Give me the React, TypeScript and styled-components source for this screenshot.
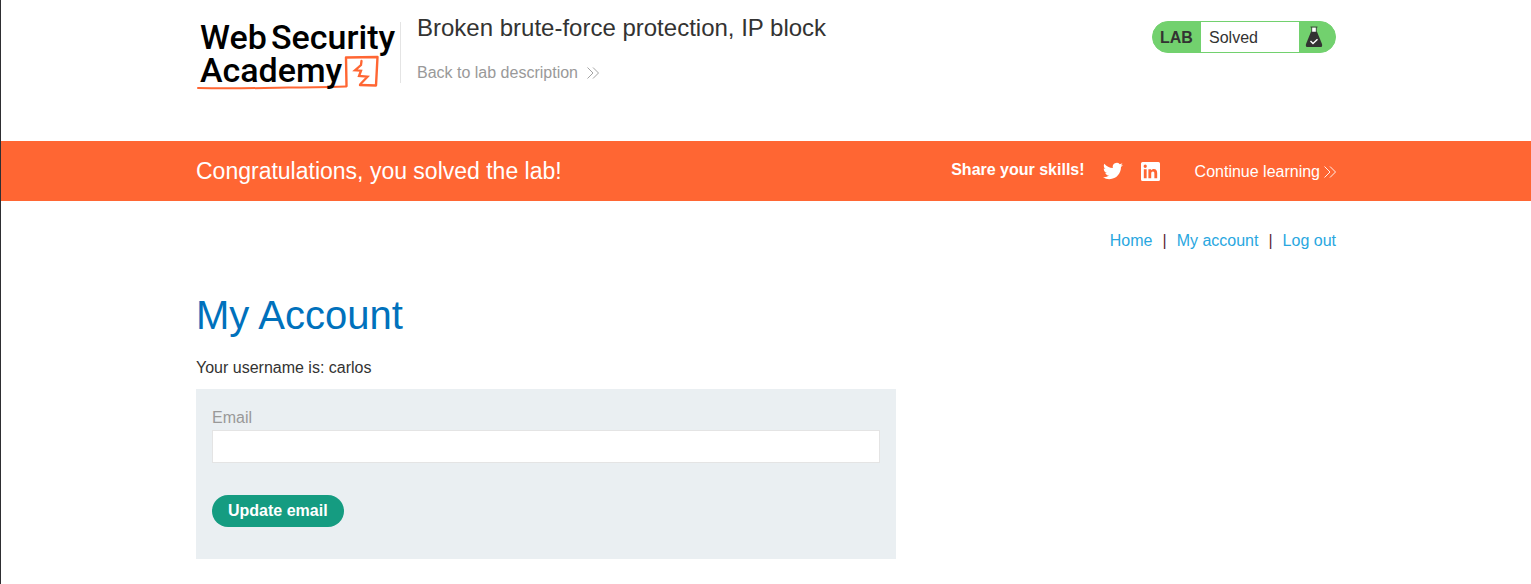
import React from "react";
import styled, { createGlobalStyle } from "styled-components";

const GlobalStyle = createGlobalStyle`
  *, *::before, *::after { box-sizing: border-box; }
  body {
    margin: 0;
    background: #fff;
    color: #333332;
    font-family: "Liberation Sans", Arial, sans-serif;
    font-size: 16px;
    line-height: 24px;
  }
`;

const Page = styled.div`
  min-height: 100vh;
  border-left: 1px solid #2e2e32;
`;

const Container = styled.div`
  width: 100%;
  max-width: 1140px;
  margin: 0 auto;
`;

const Header = styled(Container).attrs({ as: "header" })`
  display: flex;
  align-items: flex-start;
  padding: 16px 0 45px;
`;

const LogoLink = styled.a`
  flex: none;
  display: block;
  height: 80px;
`;

const LogoDrawing = styled.svg`
  display: block;
  overflow: visible;
`;

const LogoWord = styled.text`
  font-family: Roboto, "Liberation Sans", sans-serif;
  font-size: 34px;
  font-weight: 500;
  fill: #000;
`;

const TitleBlock = styled.div`
  flex: 1;
  margin-top: 6px;
  padding-left: 16px;
  height: 61px;
  border-left: 1px solid #e4e4e4;
`;

const LabTitle = styled.h2`
  margin: -8px 0 0;
  font-size: 24px;
  line-height: 28px;
  font-weight: 400;
`;

const BackLink = styled.a`
  display: inline-flex;
  align-items: center;
  gap: 9px;
  margin-top: 18px;
  line-height: 26px;
  color: #999;
  text-decoration: none;
`;

const LabStatus = styled.div`
  display: flex;
  align-items: center;
  width: 184px;
  height: 32px;
  margin-top: 5px;
  border: 1px solid #72d16e;
  border-radius: 16px;
  background: #72d16e;
  line-height: 32px;
  overflow: hidden;
`;

const LabTag = styled.span`
  width: 48px;
  height: 30px;
  padding-left: 7px;
  font-weight: 700;
`;

const LabState = styled.span`
  flex: 1;
  height: 30px;
  padding-left: 8px;
  background: #fff;
`;

const FlaskSlot = styled.span`
  display: flex;
  width: 36px;
  padding-left: 6px;
`;

const Banner = styled.section`
  background: #ff6633;
  color: #fff;
`;

const BannerRow = styled(Container)`
  display: flex;
  align-items: center;
  justify-content: space-between;
  min-height: 60px;
`;

const BannerTitle = styled.h4`
  margin: 0;
  font-size: 23px;
  line-height: 28px;
  font-weight: 400;
`;

const ShareGroup = styled.div`
  display: flex;
  align-items: center;
`;

const ShareLabel = styled.span`
  padding-bottom: 2px;
  margin-right: 18px;
  font-weight: 700;
`;

const SocialLink = styled.a`
  display: flex;
  margin-right: 18px;
  color: #fff;
`;

const ContinueLink = styled.a`
  display: inline-flex;
  align-items: center;
  gap: 4px;
  margin-left: 17px;
  padding-top: 2px;
  color: #fff;
  text-decoration: none;
`;

const Nav = styled.nav`
  display: flex;
  justify-content: flex-end;
  gap: 10px;
  padding-top: 28px;
`;

const NavLink = styled.a`
  color: #29a7df;
  text-decoration: none;
`;

const NavDivider = styled.span`
  color: #5c1f34;
`;

const Heading = styled.h1`
  margin: 38px 0 17px;
  color: #0071bc;
  font-size: 40px;
  line-height: 48px;
  font-weight: 400;
`;

const Username = styled.p`
  margin: 0 0 9px;
`;

const EmailForm = styled.form`
  max-width: 700px;
  padding: 16px 16px 32px;
  background: #eaeff2;
`;

const FieldLabel = styled.label`
  display: block;
  color: #999;
  line-height: 25px;
`;

const TextInput = styled.input`
  display: block;
  width: 100%;
  height: 33px;
  margin-bottom: 32px;
  padding: 0 8px;
  border: 1px solid #e4e4e4;
  border-radius: 0;
  background: #fff;
  font: inherit;
`;

const SubmitButton = styled.button`
  display: block;
  height: 32px;
  padding: 0 16px;
  border: 0;
  border-radius: 16px;
  background: #159c81;
  color: #fff;
  font: inherit;
  font-weight: 700;
  cursor: pointer;
`;

const Logo = () => (
  <LogoDrawing width="204" height="80" viewBox="0 0 204 80" role="img" aria-label="Web Security Academy">
    <LogoWord x="4" y="33">Web</LogoWord>
    <LogoWord x="75" y="33">Security</LogoWord>
    <g fill="none" stroke="#ff6633" strokeLinejoin="round" strokeLinecap="round">
      <path d="M2 72 C38 73 58 72 92 71.500 C112 71.400 132 71 150 70.500" strokeWidth="2" />
      <path d="M150.500 70 L150 41.500 L181.500 41 L180 69.500 L164 69" strokeWidth="2.400" />
      <path d="M165.500 45 L165 49 L159 54.300 L165 54.700 L163 60 L171.500 60.700 L164.500 68" strokeWidth="2.300" strokeLinejoin="miter" />
    </g>
    <LogoWord x="4" y="66">Academy</LogoWord>
  </LogoDrawing>
);

const DoubleChevron = () => (
  <svg width="12" height="12" viewBox="0 0 12 12" fill="none" stroke="currentColor" strokeWidth="0.9" aria-hidden="true">
    <path d="M0.500 0.500 L6 6 L0.500 11.500 M6 0.500 L11.500 6 L6 11.500" />
  </svg>
);

const Flask = () => (
  <svg width="18" height="22" viewBox="0 0 18 22" aria-hidden="true">
    <path d="M7 1.500 H11 V6.500 H7 Z" fill="#fff" />
    <path d="M5.500 1 H12.500 M6.700 1 V7 M11.300 1 V7" fill="none" stroke="#333332" strokeWidth="0.8" />
    <path d="M6 5.800 H12 L17 18 Q17.600 21 16 21 H2 Q0.400 21 1 18 Z" fill="#333332" />
    <path d="M5.500 15 L8 17.500 L12.500 13.300" fill="none" stroke="#fff" strokeWidth="1.400" />
  </svg>
);

const Twitter = () => (
  <svg width="20" height="20" viewBox="0 0 24 24" fill="currentColor" aria-hidden="true">
    <path d="M23.950 4.570a10 10 0 0 1-2.820.770 4.960 4.960 0 0 0 2.160-2.720c-.950.550-2 .960-3.130 1.180a4.920 4.920 0 0 0-8.380 4.480C7.690 8.100 4.070 6.130 1.640 3.160a4.820 4.820 0 0 0-.670 2.480c0 1.710.870 3.210 2.190 4.100a4.900 4.900 0 0 1-2.230-.620v.060a4.920 4.920 0 0 0 3.950 4.830 5 5 0 0 1-2.210.080 4.940 4.940 0 0 0 4.600 3.420A9.870 9.870 0 0 1 0 19.540a13.990 13.990 0 0 0 7.550 2.210c9.050 0 14-7.500 14-13.980 0-.210 0-.420-.020-.630a9.940 9.940 0 0 0 2.420-2.570z" />
  </svg>
);

const LinkedIn = () => (
  <svg width="19" height="19" viewBox="0 0 24 24" fill="currentColor" fillRule="evenodd" aria-hidden="true">
    <path d="M2 0H22a2 2 0 0 1 2 2V22a2 2 0 0 1-2 2H2a2 2 0 0 1-2-2V2a2 2 0 0 1 2-2zM3.560 9V20.450H7.120V9zM5.340 3.300a2.060 2.060 0 1 0 0 4.130 2.060 2.060 0 0 0 0-4.130zM9.350 9V20.450H12.910V14.880c0-1.850.700-2.860 2.130-2.860 1.540 0 1.850 1.170 1.850 2.760V20.450H20.450V14.180c0-3.430-1.120-5.460-4.270-5.460-1.630 0-2.830.900-3.370 1.840V9z" />
  </svg>
);

export default function App() {
  return (
    <Page>
      <GlobalStyle />
      <Header>
        <LogoLink href="#academy">
          <Logo />
        </LogoLink>
        <TitleBlock>
          <LabTitle>Broken brute-force protection, IP block</LabTitle>
          <BackLink href="#description">
            Back to lab description
            <DoubleChevron />
          </BackLink>
        </TitleBlock>
        <LabStatus>
          <LabTag>LAB</LabTag>
          <LabState>Solved</LabState>
          <FlaskSlot>
            <Flask />
          </FlaskSlot>
        </LabStatus>
      </Header>

      <Banner>
        <BannerRow>
          <BannerTitle>Congratulations, you solved the lab!</BannerTitle>
          <ShareGroup>
            <ShareLabel>Share your skills!</ShareLabel>
            <SocialLink href="#twitter" aria-label="Share on Twitter">
              <Twitter />
            </SocialLink>
            <SocialLink href="#linkedin" aria-label="Share on LinkedIn">
              <LinkedIn />
            </SocialLink>
            <ContinueLink href="#continue">
              Continue learning
              <DoubleChevron />
            </ContinueLink>
          </ShareGroup>
        </BannerRow>
      </Banner>

      <Container as="main">
        <Nav>
          <NavLink href="#home">Home</NavLink>
          <NavDivider>|</NavDivider>
          <NavLink href="#account">My account</NavLink>
          <NavDivider>|</NavDivider>
          <NavLink href="#logout">Log out</NavLink>
        </Nav>
        <Heading>My Account</Heading>
        <Username>Your username is: carlos</Username>
        <EmailForm onSubmit={(event: React.FormEvent) => event.preventDefault()}>
          <FieldLabel htmlFor="email">Email</FieldLabel>
          <TextInput id="email" type="email" name="email" />
          <SubmitButton type="submit">Update email</SubmitButton>
        </EmailForm>
      </Container>
    </Page>
  );
}
